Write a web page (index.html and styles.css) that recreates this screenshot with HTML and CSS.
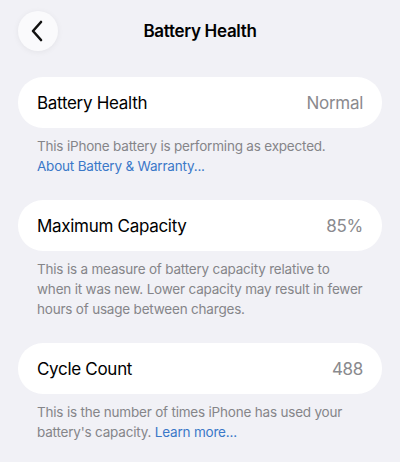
FILE: index.html
```html
<!DOCTYPE html>
<html lang="en">
<head>
    <meta charset="UTF-8">
    <meta name="viewport" content="width=device-width, initial-scale=1.0">
    <title>Battery Health</title>
    <link rel="stylesheet" href="styles.css">
</head>
<body>
    <div class="screen">
        <div class="nav-bar">
            <button class="back-btn" aria-label="Back">
                <svg width="14" height="22" viewBox="0 0 14 22">
                    <path d="M11 2 L3 11 L11 20" fill="none" stroke="#111" stroke-width="2.6" stroke-linecap="round" stroke-linejoin="round"/>
                </svg>
            </button>
            <h1 class="nav-title">Battery Health</h1>
        </div>

        <div class="section">
            <div class="card">
                <span class="label">Battery Health</span>
                <span class="value">Normal</span>
            </div>
            <p class="footer">This iPhone battery is performing as expected.<br><a href="#" class="link">About Battery &amp; Warranty...</a></p>
        </div>

        <div class="section">
            <div class="card">
                <span class="label">Maximum Capacity</span>
                <span class="value">85%</span>
            </div>
            <p class="footer">This is a measure of battery capacity relative to when it was new. Lower capacity may result in fewer hours of usage between charges.</p>
        </div>

        <div class="section">
            <div class="card">
                <span class="label">Cycle Count</span>
                <span class="value">488</span>
            </div>
            <p class="footer">This is the number of times iPhone has used your battery's capacity. <a href="#" class="link">Learn more...</a></p>
        </div>
    </div>
</body>
</html>
```

FILE: styles.css
```css
body {
    margin: 0;
    background: #f1f1f6;
    font-family: Inter, "Noto Sans", sans-serif;
    color: #000;
}

.screen {
    padding: 11px 18px 0;
}

.nav-bar {
    display: flex;
    align-items: center;
    height: 40px;
    margin-bottom: 26px;
}

.back-btn {
    width: 40px;
    height: 40px;
    border-radius: 50%;
    border: none;
    background: #fafafc;
    box-shadow: 0 1px 6px rgba(0, 0, 0, 0.06);
    display: flex;
    align-items: center;
    justify-content: center;
    padding: 0 2px 0 0;
}

.nav-title {
    flex: 1;
    margin: 0 40px 0 0;
    text-align: center;
    font-size: 17px;
    font-weight: 600;
    letter-spacing: -0.3px;
}

.section {
    margin-bottom: 24px;
}

.card {
    background: #fff;
    border-radius: 25px;
    height: 51px;
    padding: 0 19px;
    display: flex;
    align-items: center;
    justify-content: space-between;
    font-size: 17px;
    letter-spacing: -0.3px;
}

.value {
    color: #8a8a8e;
}

.footer {
    margin: 8px 0 0;
    padding: 0 19px;
    font-size: 13.5px;
    letter-spacing: -0.2px;
    line-height: 20px;
    color: #858589;
}

.link {
    color: #3b78c8;
    text-decoration: none;
}
```
